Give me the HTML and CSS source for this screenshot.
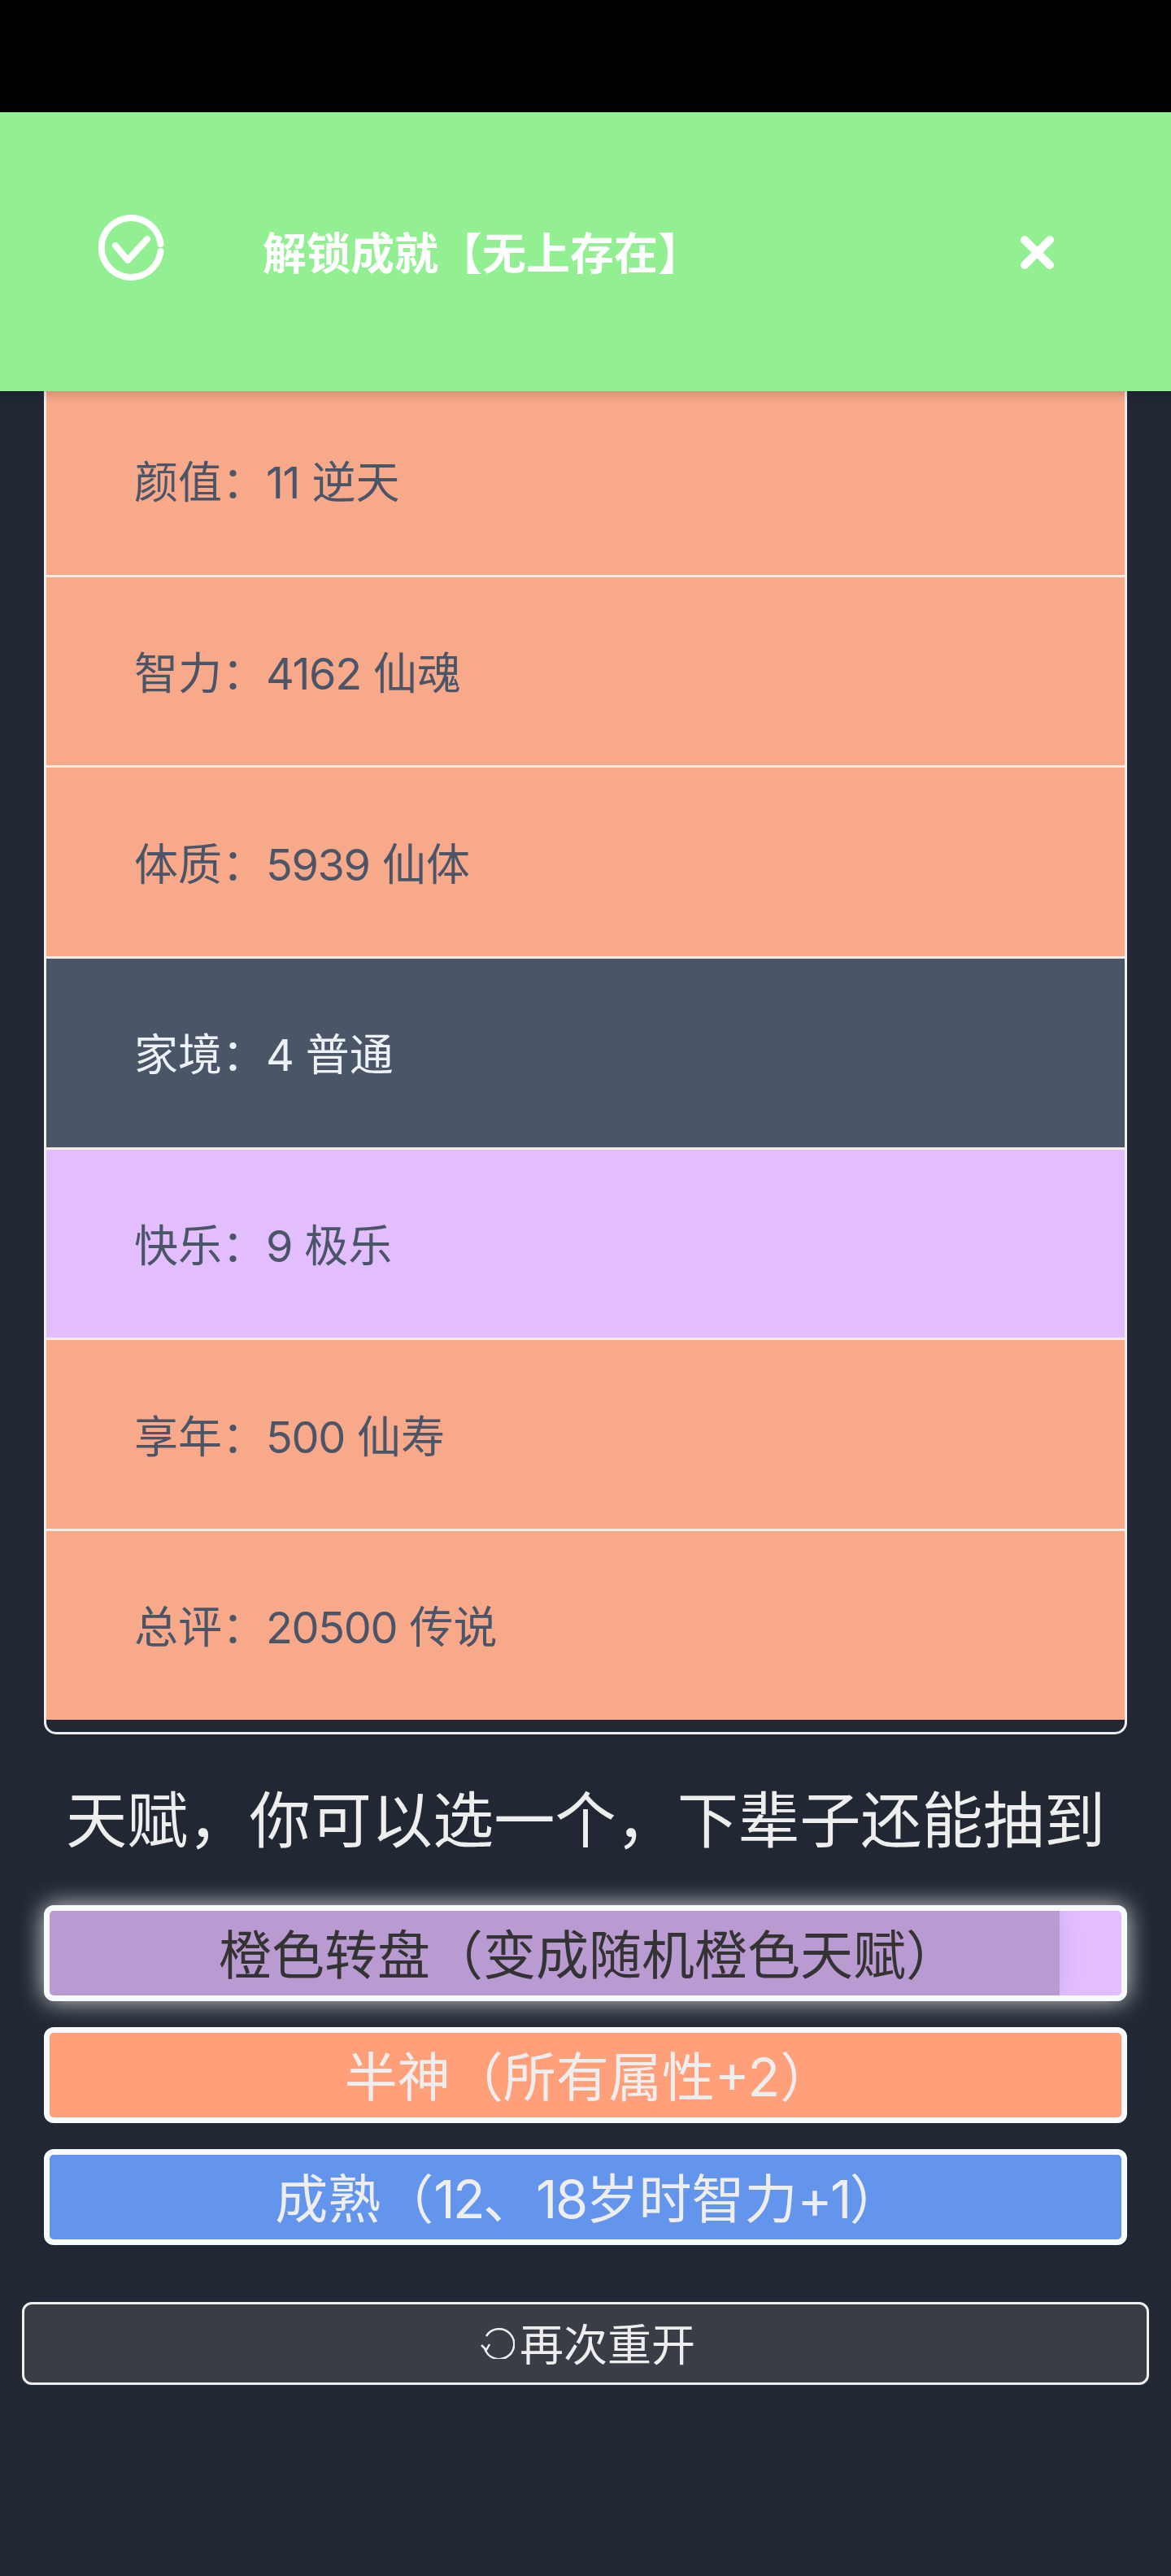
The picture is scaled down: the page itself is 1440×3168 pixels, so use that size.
FILE: index.html
```html
<!DOCTYPE html>
<html lang="zh-CN">
<head>
  <meta charset="UTF-8">
  <meta name="viewport" content="width=device-width, initial-scale=1.0">
  <title>人生重开模拟器</title>
  <link rel="stylesheet" href="styles.css">
</head>
<body>
  <div class="status-bar"></div>

  <div class="toast">
    <svg class="toast-icon" viewBox="0 0 81 81" width="81" height="81">
      <path d="M76.5 36A36.5 36.5 0 1 0 76.5 45"/>
      <path d="M21 38L36 56L60 30"/>
    </svg>
    <div class="toast-text">解锁成就【无上存在】</div>
    <svg class="toast-close" viewBox="0 0 41 41" width="41" height="41">
      <path d="M5 5L36 36M36 5L5 36"/>
    </svg>
  </div>

  <ul class="summary">
    <li class="row row-orange"><span>颜值：<span class="num">11</span> 逆天</span></li>
    <li class="row row-orange"><span>智力：<span class="num">4162</span> 仙魂</span></li>
    <li class="row row-orange"><span>体质：<span class="num">5939</span> 仙体</span></li>
    <li class="row row-gray"><span>家境：<span class="num">4</span> 普通</span></li>
    <li class="row row-purple"><span>快乐：<span class="num">9</span> 极乐</span></li>
    <li class="row row-orange"><span>享年：<span class="num">500</span> 仙寿</span></li>
    <li class="row row-orange"><span>总评：<span class="num">20500</span> 传说</span></li>
  </ul>

  <h2 class="talent-title">天赋，你可以选一个，下辈子还能抽到</h2>

  <div class="talents">
    <div class="talent talent-purple selected">
      <div class="talent-fill" style="width: 94.2%"></div>
      <span class="talent-name">橙色转盘（变成随机橙色天赋）</span>
    </div>
    <div class="talent talent-orange">
      <span class="talent-name">半神（所有属性+2）</span>
    </div>
    <div class="talent talent-blue">
      <span class="talent-name">成熟（<span class="num-tight">12</span>、<span class="num-tight">18</span>岁时智力<span class="num-tight">+1</span>）</span>
    </div>
  </div>

  <div class="restart">
    <svg class="restart-icon" viewBox="0 0 42 40" width="42" height="40">
      <path d="M7 12A18.5 18.5 0 1 1 5 27"/>
      <path d="M1 23L7 29L11 22"/>
    </svg>
    <span>再次重开</span>
  </div>
</body>
</html>
```

FILE: styles.css
```css
* {
  box-sizing: border-box;
}
body {
  margin: 0;
  min-height: 3168px;
  background-color: #212833;
  font-family: Inter, "Noto Sans CJK SC", sans-serif;
  color: #eeeeee;
}
.status-bar {
  height: 138px;
  background-color: #000000;
}
.toast {
  position: relative;
  z-index: 2;
  display: flex;
  align-items: center;
  height: 343px;
  padding: 0 144px 0 121px;
  background-color: #92ef92;
  color: #ffffff;
  box-shadow: 0 6px 10px rgba(0, 0, 0, 0.14);
}
.toast svg {
  flex: none;
  fill: none;
  stroke: #ffffff;
  stroke-linecap: round;
  stroke-linejoin: round;
}
.toast-icon {
  margin-bottom: 10px;
  stroke-width: 8;
}
.toast-close {
  margin-top: 2px;
  stroke-width: 10;
}
.toast-text {
  flex: 1;
  margin-left: 121px;
  padding-bottom: 2px;
  font-size: 54px;
  font-weight: bold;
}
.summary {
  position: relative;
  z-index: 1;
  margin: -6px 54px 0;
  padding: 0 0 15px;
  list-style: none;
  border: 3px solid #eeeeee;
  border-top: none;
  border-radius: 0 0 15px 15px;
}
.row {
  display: flex;
  align-items: center;
  height: 234.67px;
  padding: 0 0 2px 108px;
  font-size: 54px;
  border-bottom: 3px solid #f2ebe6;
}
.row:last-child {
  height: 231.67px;
  border-bottom: none;
}
.num {
  letter-spacing: -0.025em;
}
.num-tight {
  letter-spacing: -0.04em;
}
.row-orange {
  background-color: #f8a98a;
  color: #4a5568;
}
.row-gray {
  background-color: #4a5568;
  color: #edf2f7;
}
.row-purple {
  background-color: #e3beff;
  color: #4a5568;
}
.talent-title {
  margin: 49px 0 48px;
  font-size: 75.2px;
  font-weight: normal;
  line-height: 113px;
  text-align: center;
}
.talents {
  display: flex;
  flex-direction: column;
  gap: 32px;
  margin: 0 54px;
}
.talent {
  position: relative;
  display: flex;
  align-items: center;
  justify-content: center;
  height: 118px;
  padding: 0 0 3px 8px;
  font-size: 65px;
  border: 7px solid #f7fafc;
  border-radius: 12px;
  overflow: hidden;
}
.talent-name {
  position: relative;
}
.talent-fill {
  position: absolute;
  top: 0;
  bottom: 0;
  left: 0;
  background-color: rgba(0, 0, 0, 0.18);
  box-shadow: 0 0 30px rgba(0, 0, 0, 0.1);
}
.talent-purple {
  background-color: #e3beff;
  color: #333333;
}
.talent-orange {
  background-color: #ffa07a;
}
.talent-blue {
  background-color: #6495ed;
}
.selected {
  box-shadow: 0 0 30px rgba(255, 255, 255, 0.8);
}
.restart {
  display: flex;
  align-items: center;
  justify-content: center;
  height: 102px;
  margin: 70px 27px 0;
  padding: 0 0 2px 6px;
  font-size: 54px;
  background-color: #3a3d46;
  border: 3px solid #eeeeee;
  border-radius: 12px;
}
.restart-icon {
  flex: none;
  margin-right: 6px;
  fill: none;
  stroke: #eeeeee;
  stroke-width: 2.5;
}
```
